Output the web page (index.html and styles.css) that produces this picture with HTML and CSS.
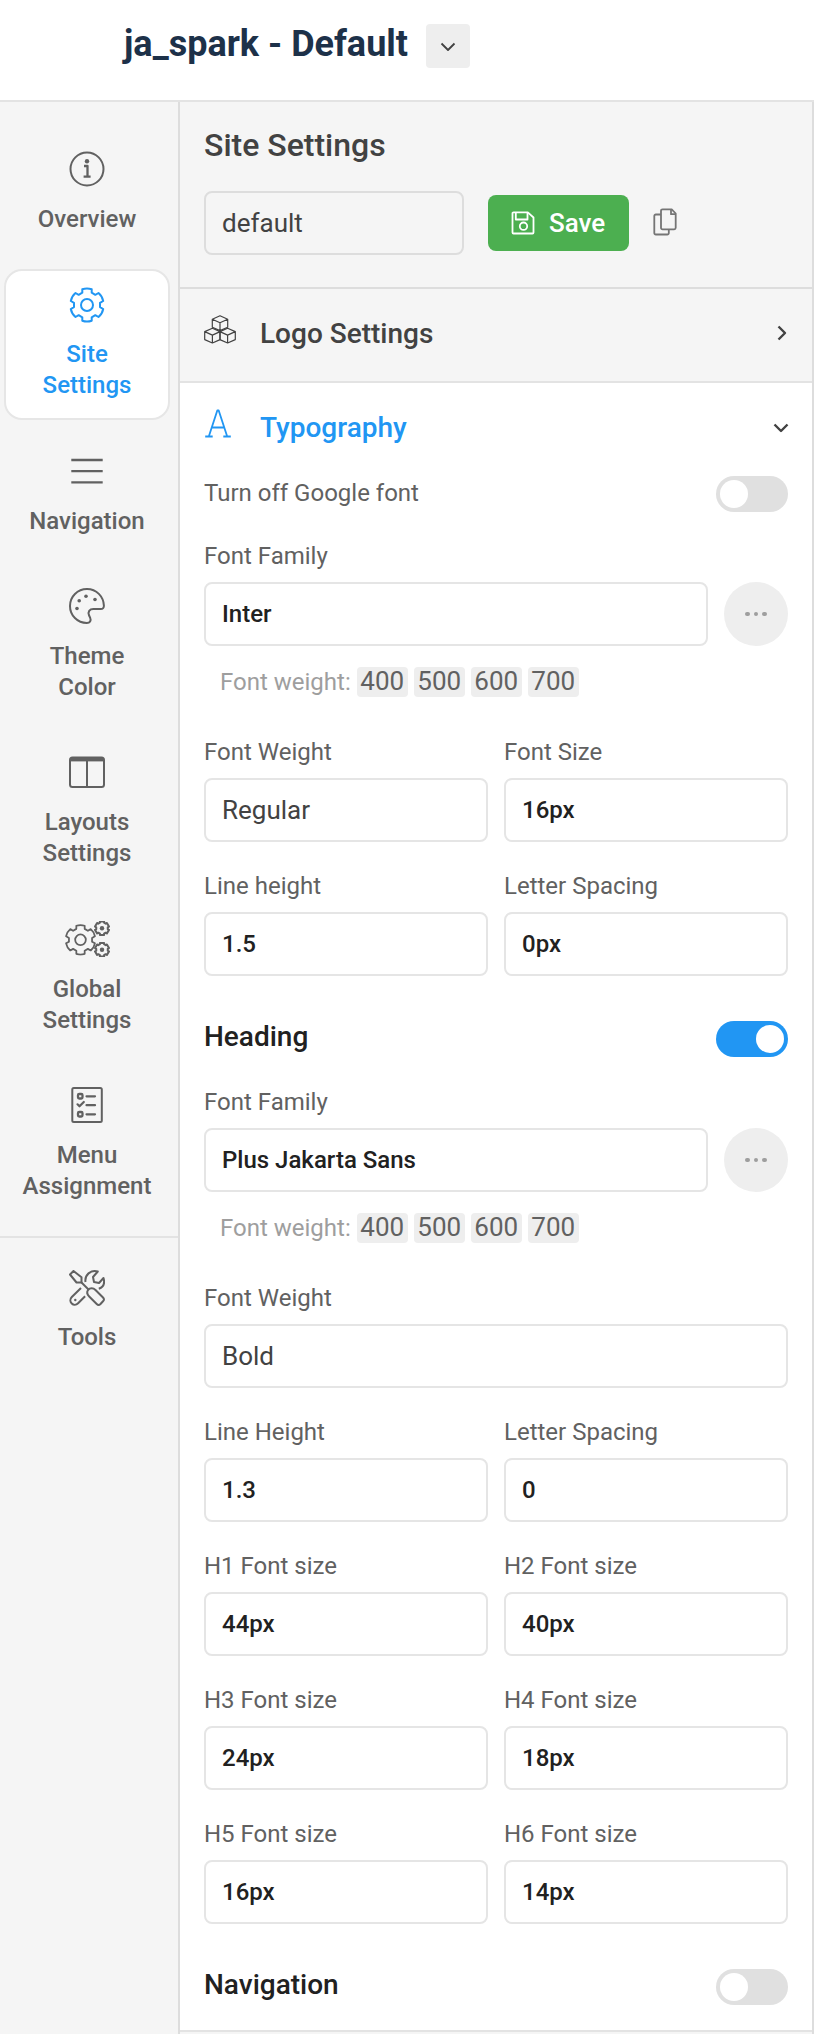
FILE: index.html
```
<!DOCTYPE html>
<html lang="en">
<head>
    <meta charset="UTF-8">
    <meta name="viewport" content="width=device-width, initial-scale=1.0">
    <title>ja_spark - Default</title>
    <link rel="stylesheet" href="styles.css">
</head>
<body>

<svg class="symbols" aria-hidden="true">
    <symbol id="gear" viewBox="-18 -18 36 36">
        <path d="M-4.7 -12.3V-15.8Q0 -17.4 4.7 -15.8V-12.3L8.3 -10.2L11.5 -12Q15.3 -8.8 16.2 -4L13 -2.1V2.1L16.2 4Q15.3 8.8 11.5 12L8.3 10.2L4.7 12.3V15.8Q0 17.4 -4.7 15.8V12.3L-8.3 10.2L-11.5 12Q-15.3 8.8 -16.2 4L-13 2.1V-2.1L-16.2 -4Q-15.3 -8.8 -11.5 -12L-8.3 -10.2Z"/>
        <circle r="6"/>
    </symbol>
    <symbol id="gear-small" viewBox="-18 -18 36 36">
        <path d="M-4.7 -12.3V-15.3H4.7V-12.3L8.3 -10.2L11 -11.7L15.7 -3.8L13 -2.1V2.1L15.7 3.8L11 11.7L8.3 10.2L4.7 12.3V15.3H-4.7V12.3L-8.3 10.2L-11 11.7L-15.7 3.8L-13 2.1V-2.1L-15.7 -3.8L-11 -11.7L-8.3 -10.2Z"/>
        <circle class="fill" r="5"/>
    </symbol>
</svg>

<header class="topbar">
    <h1>ja_spark - Default</h1>
    <button type="button" class="style-toggle" aria-label="Choose style">
        <svg class="icon" width="16" height="10" viewBox="0 0 16 10"><path d="M1.5 1.5L8 8l6.5-6.5"/></svg>
    </button>
</header>

<div class="layout">
    <nav class="sidebar">
        <a class="nav-item">
            <svg class="icon" width="36" height="36" viewBox="0 0 36 36">
                <circle cx="18" cy="18" r="16.5"/>
                <circle class="fill" cx="18" cy="10.3" r="2.2"/>
                <path d="M15 15h3.5v10.5M14.6 25.7h7" stroke-width="2.3"/>
            </svg>
            <span>Overview</span>
        </a>
        <a class="nav-item active">
            <svg class="icon" width="36" height="36"><use href="#gear"/></svg>
            <span>Site Settings</span>
        </a>
        <a class="nav-item">
            <svg class="icon" width="36" height="36" viewBox="0 0 36 36">
                <path d="M2.3 7h31.4M2.3 18.2h31.4M2.3 29.3h31.4" stroke-width="2.3"/>
            </svg>
            <span>Navigation</span>
        </a>
        <a class="nav-item">
            <svg class="icon" width="36" height="36" viewBox="0 0 36 36">
                <path d="M18 1C8.500 1 1 8.500 1 18s7.500 17 16.800 17c3.200 0 4.600-2.500 3.300-5.300l-1-2.200c-1.700-3.800.5-6.500 4.300-6.500h7.300c2.200 0 3.300-1.400 3.200-3.400C34.500 8.500 27.500 1 18 1z"/>
                <circle class="fill" cx="8" cy="20.5" r="1.8"/>
                <circle class="fill" cx="10.2" cy="12.7" r="1.8"/>
                <circle class="fill" cx="17" cy="8.2" r="1.8"/>
                <circle class="fill" cx="26" cy="11.5" r="1.8"/>
            </svg>
            <span>Theme Color</span>
        </a>
        <a class="nav-item">
            <svg class="icon" width="36" height="36" viewBox="0 0 36 36">
                <rect x="1" y="2.5" width="34" height="29.5" rx="2.5"/>
                <path d="M18 5v27"/>
                <path d="M2 4.500h32" stroke-width="3.8"/>
            </svg>
            <span>Layouts Settings</span>
        </a>
        <a class="nav-item">
            <svg class="icon" width="45" height="36" viewBox="0 0 45 36">
                <use href="#gear" x="-.5" y="2.8" width="32" height="32"/>
                <use class="small" href="#gear-small" x="29" y="-.8" width="16" height="16"/>
                <use class="small" href="#gear-small" x="29" y="20.7" width="16" height="16"/>
            </svg>
            <span>Global Settings</span>
        </a>
        <a class="nav-item">
            <svg class="icon" width="36" height="36" viewBox="0 0 36 36">
                <rect x="3.3" y="1" width="29.5" height="34" rx="1.5"/>
                <rect x="9" y="7" width="4.5" height="4.5" rx="1.2" stroke-width="2.3"/>
                <rect x="9" y="25" width="4.5" height="4.5" rx="1.2" stroke-width="2.3"/>
                <path d="M8.500 17.300l2 2 4.300-4.300M17.500 9.300h8.500M17.500 18.200h8.500M17.500 27.300h8.500" stroke-width="2.2" stroke-linecap="round"/>
            </svg>
            <span>Menu Assignment</span>
        </a>
        <div class="nav-group">
            <a class="nav-item">
                <svg class="icon" width="36" height="36" viewBox="0 0 36 36">
                    <path d="M1 4.500L4.500 1l8 6.300v5.200H7.500z"/>
                    <path d="M12.500 12.500l7 7"/>
                    <path d="M19 20c2-2.300 5.200-2.300 7.500 0l7.500 7.500c1.300 1.300 1.300 2.500 0 3.800L31.500 34c-1.300 1.300-2.500 1.300-3.800 0l-7.500-7.500c-2-2-2.500-4.500-1.200-6.500z"/>
                    <path d="M16.500 12C15.500 5 21.500-.5 28.800 1.500L24 7l1 5 5 1 4.500-5c1.700 5.800-.8 9.300-4.700 10.700"/>
                    <path d="M12 18L2.800 27c-4.300 4.500 2 10.600 6.300 6.300l7-7"/>
                    <circle class="fill" cx="6.3" cy="30" r="1.2"/>
                </svg>
                <span>Tools</span>
            </a>
        </div>
    </nav>

    <main class="panel">
        <div class="panel-head">
            <h2>Site Settings</h2>
            <form class="profile">
                <input type="text" class="profile-name" value="default">
                <button type="button" class="save">
                    <svg class="icon" width="24" height="24" viewBox="0 0 24 24">
                        <path d="M2.500 1.300h14.300L22.500 6.500v15a1 1 0 0 1-1 1h-19a1 1 0 0 1-1-1v-19.200a1 1 0 0 1 1-1z"/>
                        <path d="M4.800 2v6.500h11.700V2"/>
                        <circle cx="12.500" cy="15.200" r="3.700"/>
                    </svg>
                    Save
                </button>
                <svg class="icon copy" width="24" height="28" viewBox="0 0 24 28">
                    <path d="M9.500 1.300h9.200L22.700 5.500v14.300a1.500 1.500 0 0 1-1.500 1.500H9.500A1.500 1.500 0 0 1 8 19.800v-17a1.500 1.500 0 0 1 1.500-1.500z"/>
                    <path d="M18 1.500v4.700h4.500M8 6.500H2.800a1.500 1.500 0 0 0-1.500 1.500v17a1.500 1.500 0 0 0 1.500 1.500h11.500a1.500 1.500 0 0 0 1.500-1.500v-3.500"/>
                </svg>
            </form>
        </div>

        <div class="group-head">
            <svg class="icon thin" width="32" height="29" viewBox="0 0 32 29">
                <path id="cube" d="M16 .8l7.700 3.400v8L16 15.600l-7.700-3.400v-8zM8.300 4.200L16 7.700l7.700-3.500M16 7.700v7.900"/>
                <use href="#cube" x="-7.600" y="12.400"/>
                <use href="#cube" x="7.600" y="12.400"/>
            </svg>
            <h3>Logo Settings</h3>
            <svg class="icon arrow" width="10" height="16" viewBox="0 0 10 16"><path d="M1.500 1.500L8 8l-6.500 6.500"/></svg>
        </div>

        <div class="group">
            <div class="group-head open">
                <svg class="icon" width="32" height="29" viewBox="0 0 32 29">
                    <path d="M4.800 27.500L13.300 1.500h1.400l8.500 26M1.200 27.500h7.500M19.300 27.500h7.500M7.300 18.500h13.400"/>
                </svg>
                <h3>Typography</h3>
                <svg class="icon arrow" width="16" height="10" viewBox="0 0 16 10"><path d="M1.500 1.500L8 8l6.500-6.500"/></svg>
            </div>

            <div class="switch-row">
                <label>Turn off Google font</label>
                <span class="switch"></span>
            </div>

            <div class="field">
                <label>Font Family</label>
                <div class="font-picker">
                    <input type="text" value="Inter">
                    <button type="button" class="more" aria-label="More"><i></i><i></i><i></i></button>
                </div>
            </div>
            <p class="weights">Font weight: <span>400</span><span>500</span><span>600</span><span>700</span></p>

            <div class="fields">
                <div class="field">
                    <label>Font Weight</label>
                    <input type="text" class="choice" value="Regular">
                </div>
                <div class="field">
                    <label>Font Size</label>
                    <input type="text" value="16px">
                </div>
                <div class="field">
                    <label>Line height</label>
                    <input type="text" value="1.5">
                </div>
                <div class="field">
                    <label>Letter Spacing</label>
                    <input type="text" value="0px">
                </div>
            </div>

            <div class="switch-row section">
                <h4>Heading</h4>
                <span class="switch on"></span>
            </div>

            <div class="field">
                <label>Font Family</label>
                <div class="font-picker">
                    <input type="text" value="Plus Jakarta Sans">
                    <button type="button" class="more" aria-label="More"><i></i><i></i><i></i></button>
                </div>
            </div>
            <p class="weights">Font weight: <span>400</span><span>500</span><span>600</span><span>700</span></p>

            <div class="fields">
                <div class="field wide">
                    <label>Font Weight</label>
                    <input type="text" class="choice" value="Bold">
                </div>
                <div class="field">
                    <label>Line Height</label>
                    <input type="text" value="1.3">
                </div>
                <div class="field">
                    <label>Letter Spacing</label>
                    <input type="text" value="0">
                </div>
                <div class="field">
                    <label>H1 Font size</label>
                    <input type="text" value="44px">
                </div>
                <div class="field">
                    <label>H2 Font size</label>
                    <input type="text" value="40px">
                </div>
                <div class="field">
                    <label>H3 Font size</label>
                    <input type="text" value="24px">
                </div>
                <div class="field">
                    <label>H4 Font size</label>
                    <input type="text" value="18px">
                </div>
                <div class="field">
                    <label>H5 Font size</label>
                    <input type="text" value="16px">
                </div>
                <div class="field">
                    <label>H6 Font size</label>
                    <input type="text" value="14px">
                </div>
            </div>

            <div class="switch-row section last">
                <h4>Navigation</h4>
                <span class="switch"></span>
            </div>
        </div>
    </main>
</div>

</body>
</html>
```
FILE: styles.css
```
* {
    box-sizing: border-box;
}
body {
    margin: 0;
    height: 2034px;
    overflow: hidden;
    display: flex;
    flex-direction: column;
    font-family: Roboto, sans-serif;
    font-size: 24px;
    color: #616161;
    background: #f5f5f5;
}
h1, h2, h3, h4, p {
    margin: 0;
}
input, button {
    font-family: inherit;
}
.symbols {
    position: absolute;
    width: 0;
    height: 0;
}
.icon {
    display: block;
    flex: none;
    fill: none;
    stroke: currentColor;
    stroke-width: 1.8;
    stroke-linejoin: round;
}
.icon .fill, .symbols .fill {
    fill: currentColor;
    stroke: none;
}
.icon .small {
    stroke-width: 4.6;
}
.icon.thin {
    stroke-width: 1.2;
}

/* top bar */
.topbar {
    display: flex;
    align-items: flex-start;
    flex: none;
    height: 102px;
    padding: 22px 0 0 124px;
    border-bottom: 2px solid #e3e3e3;
    background: #fff;
}
.topbar h1 {
    width: 302px;
    padding-top: 1px;
    font-size: 36px;
    line-height: 42px;
    font-weight: 700;
    white-space: nowrap;
    color: #1d3149;
}
.style-toggle {
    display: flex;
    align-items: center;
    justify-content: center;
    width: 44px;
    height: 44px;
    margin-top: 2px;
    padding: 2px 0 0;
    border: 0;
    border-radius: 4px;
    background: #eee;
    color: #424242;
}

.layout {
    display: flex;
    flex: 1;
    min-height: 0;
}

/* sidebar */
.sidebar {
    flex: none;
    width: 180px;
    padding-top: 32px;
    border-right: 2px solid #ddd;
}
.sidebar .icon {
    stroke-width: 2;
}
.nav-item {
    display: flex;
    flex-direction: column;
    align-items: center;
    gap: 16.6px;
    width: 166px;
    margin: 0 0 16px 4px;
    padding: 15.4px 14px 16px;
    border: 2px solid transparent;
    border-radius: 18px;
    line-height: 31.2px;
    font-weight: 500;
    text-align: center;
}
.nav-item span {
    width: min-content;
}
.nav-item.active {
    border-color: #e6e6e6;
    background: #fff;
    color: #2196f3;
}
.nav-group {
    padding-top: 13.8px;
    border-top: 2px solid #e3e3e3;
}

/* settings panel */
.panel {
    flex: 1;
    border-right: 2px solid #ddd;
}
.panel-head {
    height: 187px;
    padding: 24px 24px 0;
    border-bottom: 2px solid #ddd;
    color: #424242;
}
.panel-head h2 {
    font-size: 32px;
    line-height: 38px;
    font-weight: 500;
}
.profile {
    display: flex;
    align-items: center;
    gap: 24px;
    margin-top: 27px;
}
input {
    width: 100%;
    height: 64px;
    padding: 0 16px;
    border: 2px solid #e5e5e5;
    border-radius: 8px;
    background: #fff;
    font-size: 24px;
    font-weight: 500;
    color: #212121;
}
input.choice, .profile-name {
    font-size: 26px;
    font-weight: 400;
    color: #424242;
}
.profile-name {
    width: 260px;
    border-color: #ddd;
    background: transparent;
}
.save {
    display: flex;
    align-items: center;
    gap: 14px;
    width: 141px;
    height: 56px;
    padding: 0 0 0 23px;
    border: 0;
    border-radius: 8px;
    background: #4caf50;
    font-size: 26px;
    font-weight: 500;
    color: #fff;
}
.copy {
    margin-bottom: 2px;
    color: #757575;
}

.group-head {
    display: flex;
    align-items: flex-start;
    height: 94px;
    padding: 26px 24px 0;
    border-bottom: 2px solid #e3e3e3;
    color: #424242;
}
.group-head h3 {
    flex: 1;
    margin: 1px 0 0 24px;
    font-size: 28px;
    line-height: 36px;
    font-weight: 500;
}
.group-head .arrow {
    margin: 10px 1px 0 0;
    stroke-width: 2.4;
}
.group {
    padding: 0 24px;
    border-bottom: 2px solid #e3e3e3;
    background: #fff;
}
.group-head.open {
    height: 93px;
    padding: 26px 0 0;
    border: 0;
    color: #2196f3;
}
.group-head.open .arrow {
    margin: 14px -1px 0 0;
    color: #424242;
}

.switch-row {
    display: flex;
    justify-content: space-between;
    height: 36px;
    margin-bottom: 28px;
    line-height: 32px;
}
.switch-row label {
    padding-top: 1px;
}
.switch-row.section {
    margin: 45px 0 29px;
}
.switch-row.section.last {
    margin-bottom: 0;
    padding-bottom: 25px;
    height: 61px;
}
.switch-row h4 {
    margin-top: -2px;
    font-size: 28px;
    line-height: 36px;
    font-weight: 500;
    color: #212121;
}
.switch {
    display: flex;
    flex: none;
    width: 72px;
    height: 36px;
    padding: 4px;
    border-radius: 18px;
    background: #e0e0e0;
}
.switch::before {
    content: "";
    width: 28px;
    height: 28px;
    border-radius: 50%;
    background: #fff;
}
.switch.on {
    justify-content: flex-end;
    background: #2196f3;
}

.field label {
    display: block;
    margin-bottom: 10px;
    line-height: 32px;
}
.field input {
    display: block;
}
.fields {
    display: grid;
    grid-template-columns: 1fr 1fr;
    gap: 28px 16px;
}
.field.wide {
    grid-column: span 2;
}
.font-picker {
    display: flex;
    gap: 16px;
}
.more {
    display: flex;
    align-items: center;
    justify-content: center;
    gap: 4px;
    flex: none;
    width: 64px;
    height: 64px;
    padding: 0;
    border: 0;
    border-radius: 50%;
    background: #eee;
}
.more i {
    width: 4.5px;
    height: 4.5px;
    border-radius: 50%;
    background: #9e9e9e;
}
.weights {
    display: flex;
    align-items: center;
    gap: 6px;
    height: 30px;
    margin: 21px 0 39px 16px;
    line-height: 30px;
    color: #9e9e9e;
}
.weights span {
    width: 51px;
    height: 30px;
    border-radius: 4px;
    background: #eee;
    font-size: 26px;
    line-height: 29px;
    text-align: center;
    color: #616161;
}
```
